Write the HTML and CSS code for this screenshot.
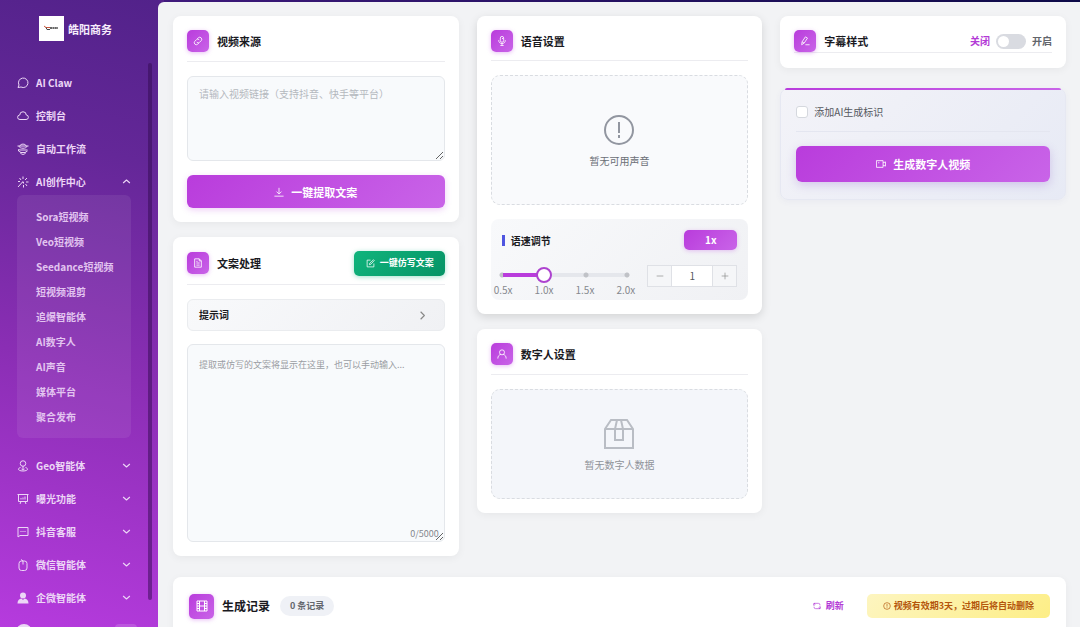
FILE: index.html
```
<!DOCTYPE html>
<html lang="zh-CN">
<head>
  <meta charset="UTF-8" />
  <meta name="viewport" content="width=device-width, initial-scale=1.0"/>
  <title>皓阳商务</title>
  <link rel="stylesheet" href="styles.css">
</head>
<body>
  <aside class="sidebar">
    <div class="brand">
      <svg class="logo" viewBox="0 0 25 25">
        <rect width="25" height="25" fill="#fff"/>
        <path d="M5 10l2 1.500h4" stroke="#d0583c" fill="none"/>
        <path d="M7 11.500l1 2h3" stroke="#444" fill="none"/>
        <path d="M11 12h8" stroke="#666" stroke-width="2" stroke-dasharray="2 .4"/>
      </svg>
      <span>皓阳商务</span>
    </div>

    <nav class="menu">
      <a href="#" class="menu-item">
        <svg class="icon" viewBox="0 0 24 24"><path d="M2 21l2-5a9.500 9.500 0 1 1 4 4z"/></svg>
        <span>AI Claw</span>
      </a>
      <a href="#" class="menu-item">
        <svg class="icon" viewBox="0 0 24 24"><path d="M6 19a4.500 4.500 0 0 1-.5-9 6.500 6.500 0 0 1 13 0 4.500 4.500 0 0 1-.5 9z"/></svg>
        <span>控制台</span>
      </a>
      <a href="#" class="menu-item">
        <svg class="icon" viewBox="0 0 24 24"><path d="M6 6c0-5 12-5 12 0M1 6h22M4 6c0 6 16 6 16 0M3 13l3 1h15M3 13v3l5 3h8l5-3M7 19c0 5 10 5 10 0"/></svg>
        <span>自动工作流</span>
      </a>
      <a href="#" class="menu-item">
        <svg class="icon" viewBox="0 0 24 24"><path d="M12 1v5M5 4l3 4M20 4l-4 4M2 11h4M18 12h5M13 18v5M17 16l3 4M11 12L2 22M10 12h3v3"/></svg>
        <span>AI创作中心</span>
        <svg class="arrow" viewBox="0 0 24 24"><path d="M3 16l9-8 9 8"/></svg>
      </a>
      <div class="submenu">
        <a href="#">Sora短视频</a>
        <a href="#">Veo短视频</a>
        <a href="#">Seedance短视频</a>
        <a href="#">短视频混剪</a>
        <a href="#">追爆智能体</a>
        <a href="#">AI数字人</a>
        <a href="#">AI声音</a>
        <a href="#">媒体平台</a>
        <a href="#">聚合发布</a>
      </div>
      <a href="#" class="menu-item">
        <svg class="icon" viewBox="0 0 24 24"><circle cx="12" cy="7" r="5.500"/><path d="M12 12v7M7 15c-7 2-5 7 5 7s12-5 5-7M9 18l3 2 3-2"/></svg>
        <span>Geo智能体</span>
        <svg class="arrow" viewBox="0 0 24 24"><path d="M3 8l9 8 9-8"/></svg>
      </a>
      <a href="#" class="menu-item">
        <svg class="icon" viewBox="0 0 24 24"><path d="M1 3h22M3 3v14h18V3M8 17l-2 5M16 17l2 5M8 13v-3M12 13V9M16 13V7"/></svg>
        <span>曝光功能</span>
        <svg class="arrow" viewBox="0 0 24 24"><path d="M3 8l9 8 9-8"/></svg>
      </a>
      <a href="#" class="menu-item">
        <svg class="icon" viewBox="0 0 24 24"><path d="M2 3h20v16H6l-4 3zM7 11h2M11 11h2M15 11h2"/></svg>
        <span>抖音客服</span>
        <svg class="arrow" viewBox="0 0 24 24"><path d="M3 8l9 8 9-8"/></svg>
      </a>
      <a href="#" class="menu-item">
        <svg class="icon" viewBox="0 0 24 24"><rect x="4" y="4" width="16" height="19" rx="5"/><path d="M12 4v7M8 1l4 3"/></svg>
        <span>微信智能体</span>
        <svg class="arrow" viewBox="0 0 24 24"><path d="M3 8l9 8 9-8"/></svg>
      </a>
      <a href="#" class="menu-item">
        <svg class="icon solid" viewBox="0 0 24 24"><circle cx="12" cy="7" r="6"/><path d="M1 23c0-6 3-9 8-10l3 3 3-3c5 1 8 4 8 10z"/></svg>
        <span>企微智能体</span>
        <svg class="arrow" viewBox="0 0 24 24"><path d="M3 8l9 8 9-8"/></svg>
      </a>
      <div class="user-row">
        <span class="avatar"></span>
        <span class="user-tag"></span>
      </div>
    </nav>
    <div class="scroll-thumb"></div>
  </aside>

  <main class="main">
    <div class="columns">
      <div class="column">
        <section class="card">
          <header class="card-header">
            <span class="badge"><svg class="icon" viewBox="0 0 24 24"><path d="M10 7l3-3a5 5 0 0 1 7 7l-4 4a5 5 0 0 1-7 0M14 17l-3 3a5 5 0 0 1-7-7l4-4a5 5 0 0 1 7 0"/></svg></span>
            <h2>视频来源</h2>
          </header>
          <textarea class="text-box link-box" aria-label="视频链接" placeholder="请输入视频链接（支持抖音、快手等平台）"></textarea>
          <button class="btn-primary">
            <svg class="icon" viewBox="0 0 24 24"><path d="M12 2v14M6 11l6 6 6-6M1 22h22"/></svg>
            一键提取文案
          </button>
        </section>

        <section class="card">
          <header class="card-header tall">
            <span class="badge"><svg class="icon" viewBox="0 0 24 24"><path d="M4 2h11l5 5v15H4zM15 2v5h5M8 8h3M8 12h8M8 17h8"/></svg></span>
            <h2>文案处理</h2>
            <button class="btn-green">
              <svg class="icon" viewBox="0 0 24 24"><path d="M12 3H3v18h18v-9M9 15l1-4 10-9 2 2-9 10z"/></svg>
              一键仿写文案
            </button>
          </header>
          <button class="prompt-row">
            提示词
            <svg class="icon" viewBox="0 0 24 24"><path d="M7 2l10 10L7 22"/></svg>
          </button>
          <div class="copy-wrap">
            <textarea class="text-box copy-box" aria-label="文案" placeholder="提取或仿写的文案将显示在这里，也可以手动输入..."></textarea>
            <span class="counter">0/5000</span>
          </div>
        </section>
      </div>

      <div class="column">
        <section class="card raised">
          <header class="card-header short">
            <span class="badge"><svg class="icon" viewBox="0 0 24 24"><rect x="8" y="1" width="8" height="14" rx="4"/><path d="M4 10c0 11 16 11 16 0M12 18v5M8 23h8M12 6h3"/></svg></span>
            <h2>语音设置</h2>
          </header>
          <div class="empty voice-empty">
            <svg class="empty-icon" viewBox="0 0 30 30"><circle cx="15" cy="15" r="14"/><path d="M15 7v11M15 20v3"/></svg>
            <p>暂无可用声音</p>
          </div>
          <div class="speed">
            <div class="speed-head">
              <label for="speed">语速调节</label>
              <span class="speed-value">1x</span>
            </div>
            <div class="speed-body">
              <div class="slider">
                <input type="range" id="speed" min="0.5" max="2" step="0.1" value="1">
                <div class="marks"><span>0.5x</span><span>1.0x</span><span>1.5x</span><span>2.0x</span></div>
              </div>
              <div class="stepper">
                <button aria-label="减少"><svg class="icon" viewBox="0 0 24 24"><path d="M2 12h20"/></svg></button>
                <input type="text" aria-label="语速" value="1">
                <button aria-label="增加"><svg class="icon" viewBox="0 0 24 24"><path d="M2 12h20M12 2v20"/></svg></button>
              </div>
            </div>
          </div>
        </section>

        <section class="card">
          <header class="card-header">
            <span class="badge"><svg class="icon" viewBox="0 0 24 24"><circle cx="12" cy="8" r="6"/><path d="M2 23c0-6 3-9 7-10M22 23c0-6-3-9-7-10"/></svg></span>
            <h2>数字人设置</h2>
          </header>
          <div class="empty human-empty">
            <svg class="empty-icon" viewBox="0 0 30 30"><path d="M1 10v19h28V10l-6-9H7zM1 10h28M13 1l-2 9v11h8V10l-2-9"/></svg>
            <p>暂无数字人数据</p>
          </div>
        </section>
      </div>

      <div class="column side">
        <section class="card subtitle-card">
          <header class="card-header">
            <span class="badge"><svg class="icon" viewBox="0 0 24 24"><path d="M4 21l1-7 8-12 5 3-8 12zM5 14l5 3M13 21h10"/></svg></span>
            <h2>字幕样式</h2>
            <label class="switch-row">
              <span class="off">关闭</span>
              <input type="checkbox" class="switch">
              <span>开启</span>
            </label>
          </header>
        </section>

        <section class="generate">
          <label class="check-row">
            <input type="checkbox" class="check">
            添加AI生成标识
          </label>
          <button class="btn-primary btn-generate">
            <svg class="icon" viewBox="0 0 24 24"><path d="M1 4h16v16H1zM17 9l6-2v10l-6-2M5 9h3"/></svg>
            生成数字人视频
          </button>
        </section>
      </div>
    </div>

    <section class="card records">
      <span class="badge"><svg class="icon" viewBox="0 0 24 24"><path d="M2 2h20v20H2zM7 2v20M17 2v20M7 12h10M2 7h5M2 12h5M2 17h5M17 7h5M17 12h5M17 17h5"/></svg></span>
      <h2>生成记录</h2>
      <span class="count">0 条记录</span>
      <button class="refresh">
        <svg class="icon" viewBox="0 0 24 24"><path d="M3 13V4h13a5 5 0 0 1 5 5M1 8l2-4 4 3M21 11v9H8a5 5 0 0 1-5-5M23 16l-2 4-4-3"/></svg>
        刷新
      </button>
      <span class="notice">
        <svg class="icon" viewBox="0 0 24 24"><circle cx="12" cy="12" r="10"/><path d="M12 6v8M12 16v2"/></svg>
        视频有效期3天，过期后将自动删除
      </span>
    </section>
  </main>
</body>
</html>
```
FILE: styles.css
```
* {
  box-sizing: border-box;
}

body {
  font-family: "Noto Sans CJK SC", sans-serif;
  font-size: 10px;
  line-height: 16px;
  margin: 0;
  height: 100vh;
  display: flex;
  overflow: hidden;
  color: #1a1a1f;
  background: linear-gradient(90deg, #54238a, #3a1878 20%, #0d0a48);
}

h2, p {
  margin: 0;
}

h2 {
  font-size: 11px;
  font-weight: 700;
}

a {
  color: inherit;
  text-decoration: none;
}

button, input, textarea {
  font-family: inherit;
  font-size: inherit;
  line-height: inherit;
  color: inherit;
  margin: 0;
}

button {
  border: none;
  padding: 0;
  cursor: pointer;
}

.icon, .arrow {
  width: 12px;
  height: 12px;
  flex: none;
  fill: none;
  stroke: currentColor;
  stroke-width: 2;
  stroke-linejoin: round;
}

.icon.solid {
  fill: currentColor;
  stroke: none;
}

/* sidebar */
.sidebar {
  position: relative;
  width: 158px;
  flex: none;
  margin-right: -6px;
  padding-right: 6px;
  box-sizing: content-box;
  overflow: hidden;
  color: #ecd6f6;
  background: linear-gradient(194deg, #52228a 0%, #642798 25%, #8a2eb4 58%, #b63bde 100%);
}

.brand {
  display: flex;
  align-items: center;
  gap: 4px;
  height: 66px;
  padding: 0 0 9px 39px;
  font-size: 11px;
  font-weight: 700;
  color: #f6ecfb;
}

.logo {
  width: 25px;
  height: 25px;
}

.menu-item {
  display: flex;
  align-items: center;
  gap: 7px;
  height: 33px;
  padding: 0 27px 0 17px;
  font-weight: 700;
}

.arrow {
  width: 9px;
  height: 9px;
  margin-left: auto;
  stroke-width: 3;
}

.submenu {
  margin: -3px 27px 11px 17px;
  padding: 9px 0 9px 19px;
  border-radius: 6px;
  background: rgba(255, 255, 255, 0.07);
  font-weight: 700;
  color: #e2c4f0;
}

.submenu a {
  display: block;
  height: 25px;
  line-height: 25px;
}

.user-row {
  display: flex;
  justify-content: space-between;
  padding: 10px 21px 0 16px;
}

.avatar {
  width: 16px;
  height: 16px;
  border-radius: 50%;
  background: #ead8f4;
}

.user-tag {
  width: 22px;
  height: 16px;
  border-radius: 4px;
  background: rgba(255, 255, 255, 0.15);
}

.scroll-thumb {
  position: absolute;
  top: 63px;
  bottom: 27px;
  left: 148px;
  width: 4px;
  border-radius: 2px;
  background: rgba(50, 10, 80, 0.5);
}

/* content */
.main {
  position: relative;
  flex: 1;
  min-width: 0;
  margin-top: 2px;
  padding: 14px 14px 0 15px;
  overflow: hidden;
  border-radius: 6px 0 0 0;
  background: #f2f3f5;
}

.columns {
  display: grid;
  grid-template-columns: repeat(3, 1fr);
  gap: 18px;
  align-items: start;
}

.column {
  display: grid;
  gap: 15px;
}

.column.side {
  gap: 20px;
}

.card {
  padding: 14px;
  border-radius: 8px;
  background: #fff;
  box-shadow: 0 2px 8px rgba(0, 0, 0, 0.05);
}

.card.raised {
  box-shadow: 0 3px 10px rgba(0, 0, 0, 0.13);
}

.card-header {
  display: flex;
  align-items: center;
  gap: 8px;
  height: 32px;
  margin-bottom: 14px;
  padding-bottom: 9px;
  border-bottom: 1px solid #ececf0;
}

.card-header.tall {
  height: 34px;
  padding-bottom: 9px;
}

.card-header.short {
  height: 31px;
}

.badge {
  display: flex;
  align-items: center;
  justify-content: center;
  width: 22px;
  height: 22px;
  flex: none;
  border-radius: 5px;
  color: #fff;
  background: linear-gradient(135deg, #b93cdc, #c964e8);
  box-shadow: 0 1px 4px rgba(190, 70, 225, 0.35);
}

.badge .icon {
  width: 10px;
  height: 10px;
}

.text-box {
  display: block;
  width: 100%;
  padding: 9px 11px;
  border: 1px solid #e4e7eb;
  border-radius: 6px;
  outline: none;
  resize: vertical;
  background: #f8fafc;
}

.text-box::placeholder {
  color: #b4b8be;
}

.link-box {
  height: 85px;
}

.btn-primary {
  display: flex;
  align-items: center;
  justify-content: center;
  gap: 7px;
  width: 100%;
  height: 33px;
  margin-top: 14px;
  border-radius: 6px;
  font-size: 11px;
  font-weight: 700;
  color: #fff;
  background: linear-gradient(135deg, #b93cdc, #c964e8);
  box-shadow: 0 2px 6px rgba(190, 70, 225, 0.25);
}

.btn-primary .icon {
  width: 10px;
  height: 10px;
}

.btn-green {
  display: flex;
  align-items: center;
  justify-content: center;
  gap: 5px;
  height: 25px;
  margin-left: auto;
  padding: 0 11px 0 12px;
  border-radius: 5px;
  font-size: 9px;
  font-weight: 700;
  color: #fff;
  background: linear-gradient(135deg, #10b47c, #069466);
  box-shadow: 0 1px 5px rgba(16, 180, 124, 0.4);
}

.btn-green .icon {
  width: 9px;
  height: 9px;
}

.prompt-row {
  display: flex;
  align-items: center;
  justify-content: space-between;
  width: 100%;
  height: 32px;
  margin-bottom: 13px;
  padding: 0 17px 0 11px;
  border: 1px solid #eaecef;
  border-radius: 6px;
  font-weight: 700;
  background: linear-gradient(135deg, #f8f9fb, #f0f1f4);
}

.prompt-row .icon {
  width: 9px;
  height: 9px;
  stroke-width: 3;
  color: #888;
}

.copy-wrap {
  position: relative;
}

.copy-box {
  height: 198px;
  padding: 12px 11px;
  font-size: 9px;
}

.copy-box::placeholder {
  color: #9a9da3;
}

.counter {
  position: absolute;
  right: 6px;
  bottom: 0;
  font-size: 9px;
  color: #85888e;
}

.empty {
  display: flex;
  flex-direction: column;
  align-items: center;
  justify-content: center;
  gap: 8px;
  padding-top: 3px;
  border: 1px dashed #d9dce1;
  border-radius: 9px;
}

.empty-icon {
  width: 30px;
  height: 30px;
  fill: none;
  stroke: currentColor;
  stroke-width: 2;
}

.voice-empty {
  height: 130px;
  color: #6b6f76;
  background: #f9fafc;
}

.voice-empty .empty-icon {
  color: #9296a0;
}

.human-empty {
  height: 110px;
  color: #8f9399;
  background: #f4f6fa;
}

.human-empty .empty-icon {
  color: #b9bdc4;
}

.speed {
  margin-top: 14px;
  padding: 11px 11px 4px 3px;
  border-radius: 8px;
  background: linear-gradient(135deg, #f8f9fb, #f0f1f4);
}

.speed-head {
  display: flex;
  align-items: center;
  justify-content: space-between;
  padding-left: 8px;
  font-weight: 700;
}

.speed-head label {
  padding-left: 6px;
  border-left: 3px solid #4f55e0;
  line-height: 11px;
}

.speed-value {
  width: 53px;
  border-radius: 5px;
  line-height: 20px;
  text-align: center;
  color: #fff;
  background: linear-gradient(135deg, #b93cdc, #c964e8);
  box-shadow: 0 1px 4px rgba(190, 70, 225, 0.3);
}

.speed-body {
  display: flex;
  justify-content: space-between;
  gap: 12px;
  padding-top: 15px;
}

.slider {
  flex: 1;
}

/* rail, filled part and the four stops */
.slider input {
  display: block;
  width: 100%;
  height: 16px;
  margin-top: 2px;
  appearance: none;
  outline: none;
  background:
    linear-gradient(90deg, #b93cdc, #b93cdc) 9px 6px / 32% 4px no-repeat,
    radial-gradient(circle, #c0c2c7 2px, transparent 3px) 5px 5px / 6px 6px no-repeat,
    radial-gradient(circle, #c0c2c7 2px, transparent 3px) 66% 5px / 6px 6px no-repeat,
    radial-gradient(circle, #c0c2c7 2px, transparent 3px) right 5px top 5px / 6px 6px no-repeat,
    linear-gradient(#e5e7ec, #e5e7ec) center / calc(100% - 16px) 4px no-repeat;
}

.slider input::-webkit-slider-thumb {
  appearance: none;
  width: 16px;
  height: 16px;
  border: 2px solid #ad43cf;
  border-radius: 50%;
  background: #fff;
}

.marks {
  display: flex;
  justify-content: space-between;
  line-height: 13px;
  color: #85888e;
}

.stepper {
  display: flex;
  width: 90px;
  height: 22px;
  border: 1px solid #dfe1e6;
}

.stepper button {
  display: flex;
  align-items: center;
  justify-content: center;
  width: 23px;
  flex: none;
  color: #888;
  background: #f5f6f8;
}

.stepper .icon {
  width: 8px;
  height: 8px;
}

.stepper input {
  width: 100%;
  min-width: 0;
  padding: 0;
  border: solid #dfe1e6;
  border-width: 0 1px;
  text-align: center;
  color: #55585e;
  background: #fff;
}

.subtitle-card {
  padding-bottom: 15px;
}

.subtitle-card .card-header {
  height: 23px;
  margin: 0;
  padding: 0;
}

.switch-row {
  display: flex;
  align-items: center;
  gap: 6px;
  margin-left: auto;
  font-weight: 700;
  color: #63666c;
}

.switch-row .off {
  color: #b33ad6;
}

.switch {
  display: flex;
  align-items: center;
  width: 30px;
  height: 15px;
  padding: 0 2px;
  appearance: none;
  border-radius: 8px;
  background: #d9dbe1;
}

.switch::before {
  content: "";
  width: 11px;
  height: 11px;
  border-radius: 50%;
  background: #fff;
}

.switch:checked {
  justify-content: flex-end;
  background: #b93cdc;
}

.generate {
  position: relative;
  padding: 15px 15px 17px;
  border: 1px solid #e6e8f2;
  border-radius: 8px;
  background: linear-gradient(135deg, #f3f3f8, #e7eaf5);
  box-shadow: 0 2px 6px rgba(80, 80, 160, 0.05);
}

.generate::before {
  content: "";
  position: absolute;
  top: -1px;
  left: 4px;
  right: 4px;
  height: 2px;
  border-radius: 2px 2px 0 0;
  background: linear-gradient(90deg, #b93cdc, #c964e8);
}

.check-row {
  display: flex;
  align-items: center;
  gap: 6px;
  padding-bottom: 11px;
  border-bottom: 1px solid #e4e6f0;
  color: #55585e;
}

.check {
  width: 12px;
  height: 12px;
  appearance: none;
  border: 1px solid #d5d8de;
  border-radius: 3px;
  background: #fff;
}

.check:checked {
  background: #b93cdc;
}

.btn-generate {
  height: 36px;
  box-shadow: 0 3px 10px rgba(130, 80, 200, 0.25);
}

.records {
  display: flex;
  align-items: center;
  height: 90px;
  margin-top: 21px;
  padding: 16px 16px 48px;
}

.records .badge {
  width: 25px;
  height: 25px;
}

.records .badge .icon {
  width: 12px;
  height: 12px;
}

.records h2 {
  margin: 0 10px 0 8px;
  font-size: 12px;
}

.count {
  padding: 2px 10px;
  border-radius: 10px;
  font-size: 9px;
  font-weight: 700;
  color: #63666c;
  background: #eff1f6;
}

.refresh {
  display: flex;
  align-items: center;
  gap: 5px;
  margin: 0 23px 0 auto;
  font-size: 9px;
  font-weight: 700;
  color: #b33ad6;
  background: none;
}

.refresh .icon, .notice .icon {
  width: 8px;
  height: 8px;
}

.notice {
  display: flex;
  align-items: center;
  gap: 3px;
  padding: 4px 16px;
  border-radius: 5px;
  font-size: 9px;
  font-weight: 700;
  color: #b4560c;
  background: linear-gradient(135deg, #fdf5c0, #fdee86);
}
```
